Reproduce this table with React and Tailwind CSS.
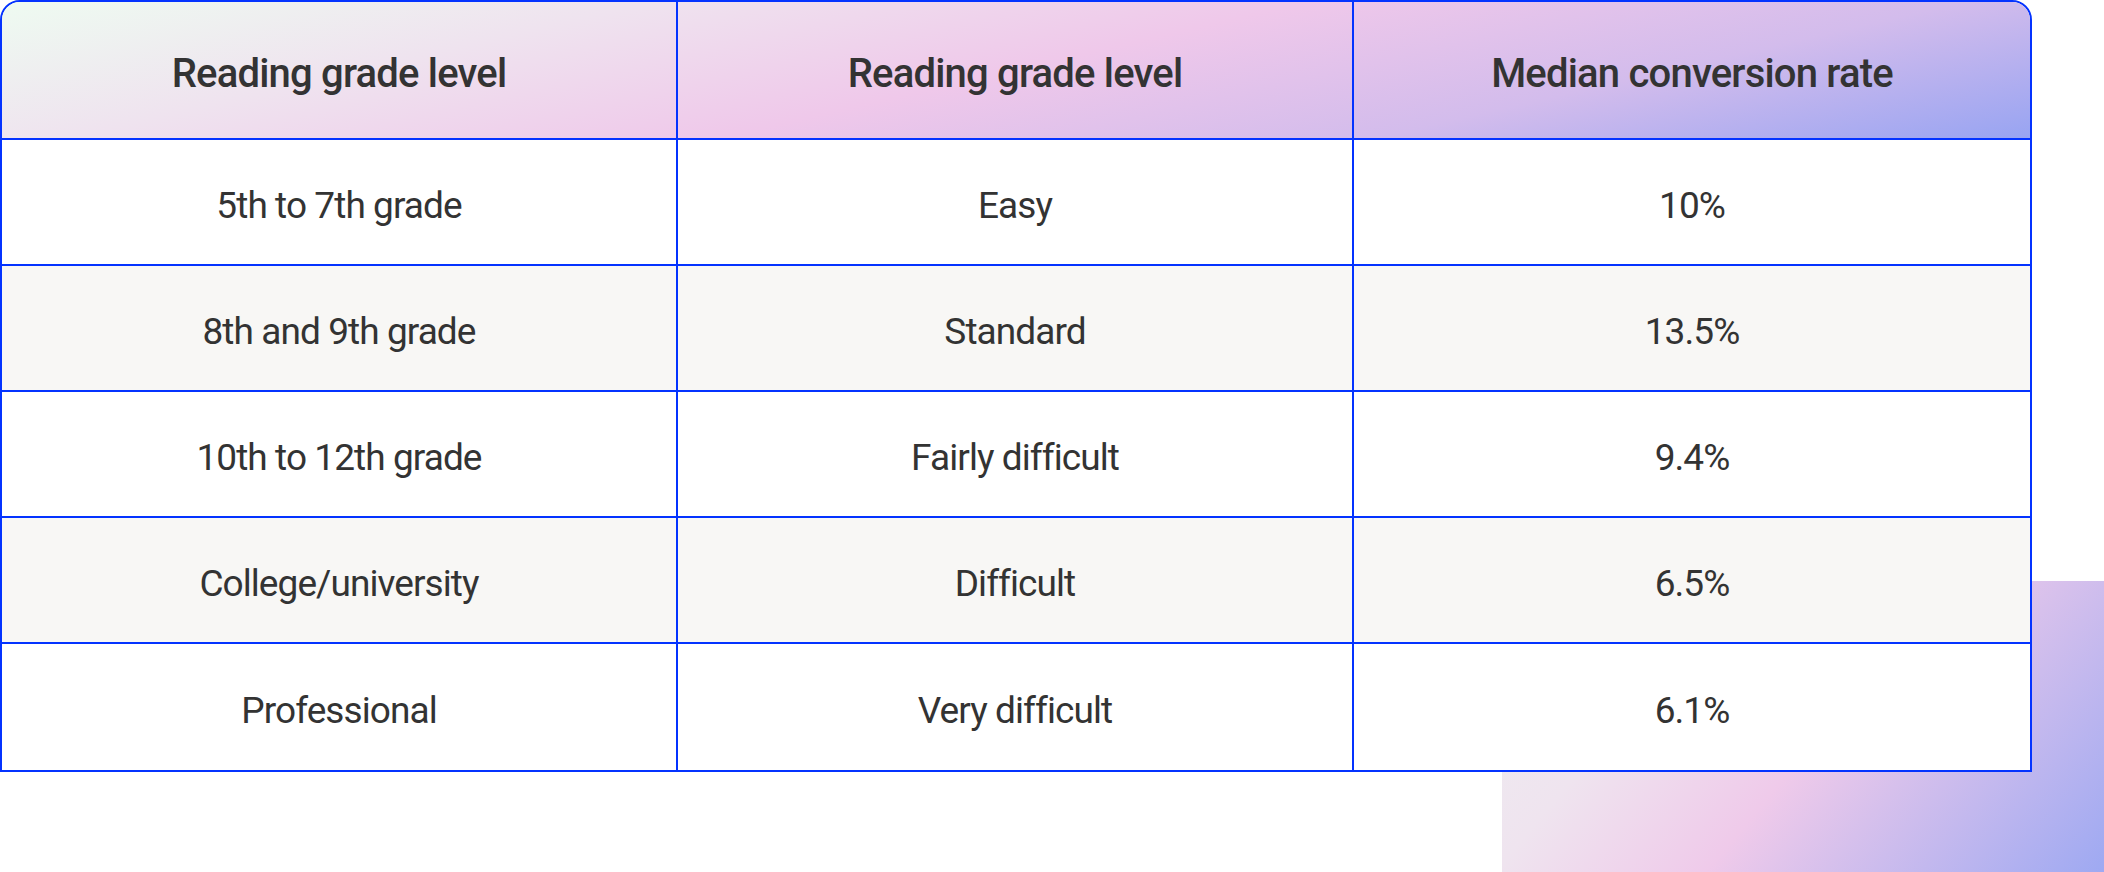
import React from "react";

const rows = [
  ["5th to 7th grade", "Easy", "10%"],
  ["8th and 9th grade", "Standard", "13.5%"],
  ["10th to 12th grade", "Fairly difficult", "9.4%"],
  ["College/university", "Difficult", "6.5%"],
  ["Professional", "Very difficult", "6.1%"],
];

const headers = ["Reading grade level", "Reading grade level", "Median conversion rate"];

export default function App() {
  return (
    <div className="relative w-[2104px] h-[872px] bg-white overflow-hidden font-['Roboto',sans-serif] text-[#333333]">
      {/* decorative gradient block behind the table */}
      <div className="absolute left-[1502px] top-[581px] w-[602px] h-[291px] bg-[linear-gradient(130deg,#eeedf0_0%,#efe4ef_28%,#efcaea_53%,#d6c0ec_67%,#9ea9f2_100%)]" />

      <div className="relative w-[2032px] border-2 border-[#0433ff] rounded-t-[20px] overflow-hidden bg-white">
        <div className="grid grid-cols-3 h-[138px] border-b-2 border-[#0433ff] bg-[linear-gradient(167deg,#eefbf1_0%,#efe3ef_25%,#efc8ea_50%,#d3bcec_75%,#98a4f2_100%)]">
          {headers.map((h, i) => (
            <div
              key={i}
              className={`flex items-center justify-center pt-2 text-[40px] leading-none font-medium tracking-[-0.02em] ${i < 2 ? "border-r-2 border-[#0433ff]" : ""}`}
            >
              {h}
            </div>
          ))}
        </div>

        {rows.map((r, ri) => (
          <div
            key={ri}
            className={`grid grid-cols-3 h-[126px] ${ri < rows.length - 1 ? "border-b-2 border-[#0433ff]" : ""} ${ri % 2 === 1 ? "bg-[#f8f7f5]" : "bg-white"}`}
          >
            {r.map((c, ci) => (
              <div
                key={ci}
                className={`flex items-center justify-center pt-1.5 text-[37px] leading-none tracking-[-0.025em] ${ci < 2 ? "border-r-2 border-[#0433ff]" : ""}`}
              >
                {c}
              </div>
            ))}
          </div>
        ))}
      </div>
    </div>
  );
}
